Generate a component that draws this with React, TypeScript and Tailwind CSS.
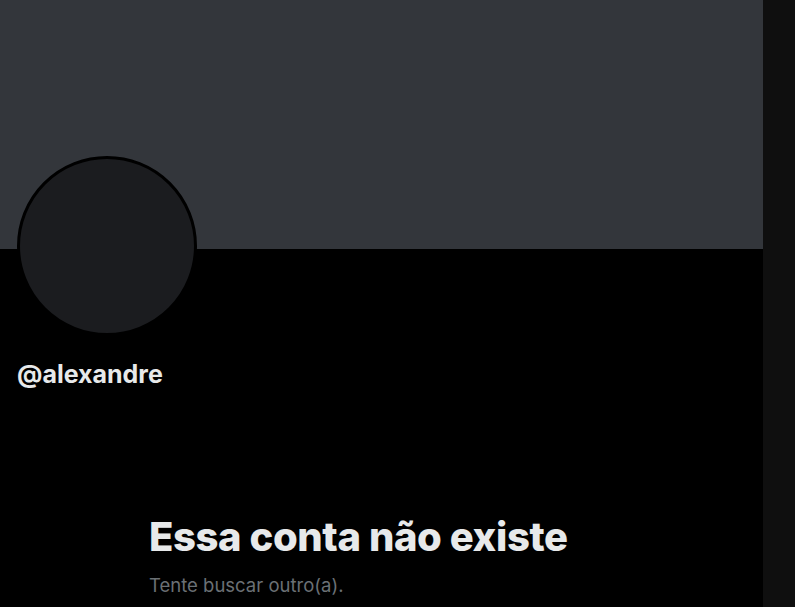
export default function App() {
  return (
    <div
      className="flex h-[607px] w-[795px] overflow-hidden bg-[#0f0f0f]"
      style={{ fontFamily: "Inter, 'Noto Sans', 'Liberation Sans', sans-serif" }}
    >
      <main className="flex w-[763px] flex-col bg-black">
        <div className="h-[249px] shrink-0 bg-[#33363b]" />
        <div className="ml-[17px] mt-[-93px] h-[180px] w-[180px] rounded-full border-[3px] border-black bg-[#1b1c1f]" />
        <div className="ml-[17px] mt-[23px] text-[25px] font-bold leading-[30px] text-[#e7e9ea]">
          @alexandre
        </div>
        <section className="ml-[149px] mt-[124px] flex flex-col">
          <h1 className="text-[40px] font-extrabold leading-[48px] tracking-[-0.4px] text-[#e7e9ea]">
            Essa conta não existe
          </h1>
          <p className="mt-[12px] text-[18.5px] leading-[24px] text-[#6b7075]">
            Tente buscar outro(a).
          </p>
        </section>
      </main>
      <aside className="flex-1" />
    </div>
  );
}
